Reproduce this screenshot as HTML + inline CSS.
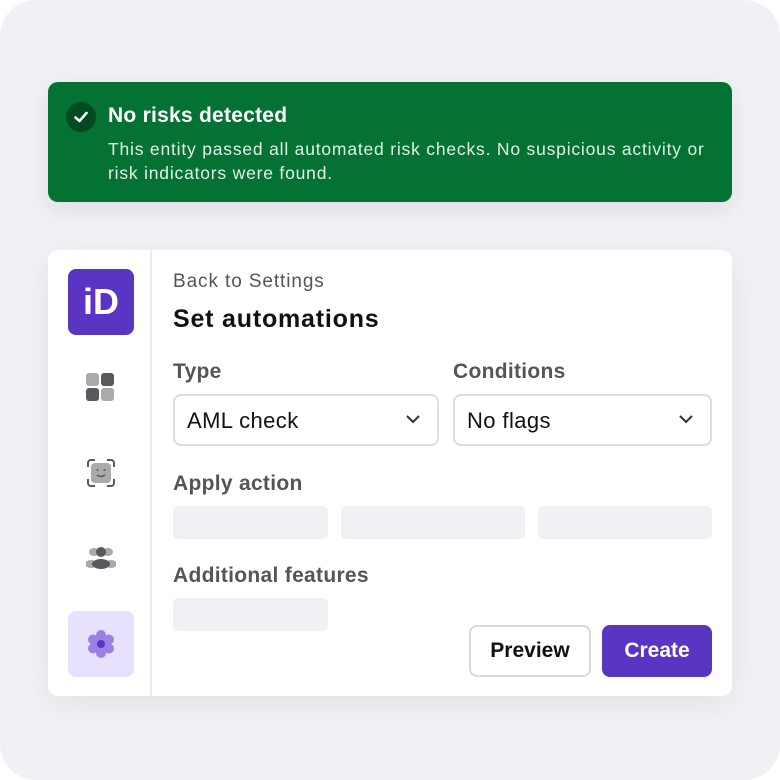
<!DOCTYPE html>
<html><head><style>
*{margin:0;padding:0;box-sizing:border-box}
body{width:780px;height:780px;background:#fff;font-family:"Liberation Sans",sans-serif;position:relative;overflow:hidden}
.bg{position:absolute;left:0;top:0;width:780px;height:780px;background:#f1f1f5;border-radius:36px}
.alert{position:absolute;left:48px;top:82px;width:684px;height:120px;background:#037232;border-radius:10px;color:#fff;box-shadow:0 8px 24px rgba(0,0,0,.08)}
.alert .ic{position:absolute;left:18px;top:20px;width:30px;height:30px;border-radius:50%;background:#024a20}
.card{position:absolute;left:48px;top:250px;width:684px;height:446px;background:#fff;border-radius:10px;box-shadow:0 8px 30px rgba(0,0,0,.06)}
.side{position:absolute;left:0;top:0;width:104px;height:446px;border-right:2px solid #ececf0}
.t{position:absolute;white-space:nowrap}
.sel{position:absolute;height:52px;border:2px solid #dcdce2;border-radius:8px;font-size:22px;color:#111;padding:12px 12px;letter-spacing:0.4px}
.ph{position:absolute;height:33px;background:#f1f1f5;border-radius:5px}
.lb{font-size:21px;font-weight:bold;color:#555;letter-spacing:0.3px}
</style></head><body>
<div class="bg"></div>
<div class="alert">
 <div class="ic"><svg width="30" height="30" viewBox="0 0 30 30"><path d="M9.5 15.5l4 3.5 7-8" stroke="#fff" stroke-width="2.6" fill="none" stroke-linecap="round" stroke-linejoin="round"/></svg></div>
 <div class="t" style="left:60px;top:22px;font-size:21px;font-weight:bold;letter-spacing:0.25px">No risks detected</div>
 <div class="t" style="left:60px;top:55px;font-size:17.5px;line-height:24px;color:#e3f1e8;letter-spacing:0.8px">This entity passed all automated risk checks. No suspicious activity or<br>risk indicators were found.</div>
</div>
<div class="card">
 <div class="side">
  <div style="position:absolute;left:20px;top:19px;width:66px;height:66px;background:#5a35c4;border-radius:8px;color:#fff;font-size:36px;font-weight:bold;text-align:center;line-height:66px">iD</div>
  <svg style="position:absolute;left:38px;top:123px" width="30" height="30"><rect x="0" y="0" width="13" height="13" rx="3" fill="#aaa"/><rect x="15" y="0" width="13" height="13" rx="3" fill="#58585e"/><rect x="0" y="15" width="13" height="13" rx="3" fill="#58585e"/><rect x="15" y="15" width="13" height="13" rx="3" fill="#aaa"/></svg>
  <svg style="position:absolute;left:38px;top:208px" width="30" height="30"><rect x="5" y="5" width="20" height="20" rx="4" fill="#aaa"/><path d="M2 9V5a3 3 0 0 1 3-3h4M21 2h4a3 3 0 0 1 3 3v4M28 21v4a3 3 0 0 1-3 3h-4M9 28H5a3 3 0 0 1-3-3v-4" stroke="#58585e" stroke-width="2" fill="none"/><circle cx="11.5" cy="12" r="1" fill="#58585e"/><circle cx="18.5" cy="12" r="1" fill="#58585e"/><path d="M11 17q4 3 8 0" stroke="#58585e" stroke-width="1.5" fill="none"/></svg>
  <svg style="position:absolute;left:38px;top:296px" width="30" height="24"><ellipse cx="8" cy="6" rx="5" ry="4" fill="#aaa"/><ellipse cx="22" cy="6" rx="5" ry="4" fill="#aaa"/><ellipse cx="5" cy="18" rx="6" ry="4" fill="#aaa"/><ellipse cx="25" cy="18" rx="6" ry="4" fill="#aaa"/><circle cx="15" cy="6" r="5" fill="#58585e"/><ellipse cx="15" cy="18" rx="9" ry="5" fill="#58585e"/></svg>
  <div style="position:absolute;left:20px;top:361px;width:66px;height:66px;background:#e7e1fd;border-radius:8px"></div>
  <svg style="position:absolute;left:39px;top:380px" width="28" height="28" viewBox="0 0 28 28"><g fill="#9b80e6"><circle cx="14" cy="5" r="5"/><circle cx="14" cy="23" r="5"/><circle cx="6" cy="9.5" r="5"/><circle cx="22" cy="9.5" r="5"/><circle cx="6" cy="18.5" r="5"/><circle cx="22" cy="18.5" r="5"/><circle cx="14" cy="14" r="8"/></g><circle cx="14" cy="14" r="4" fill="#5a35c4"/></svg>
 </div>
 <div class="t" style="left:125px;top:21px;font-size:19px;color:#555;letter-spacing:0.9px">Back to Settings</div>
 <div class="t" style="left:125px;top:55px;font-size:25px;font-weight:bold;color:#111;letter-spacing:0.8px">Set automations</div>
 <div class="t lb" style="left:125px;top:110px">Type</div>
 <div class="t lb" style="left:405px;top:110px">Conditions</div>
 <div class="sel" style="left:125px;top:144px;width:266px">AML check<svg style="position:absolute;right:16px;top:18px" width="16" height="10"><path d="M2 2l6 6 6-6" stroke="#333" stroke-width="2" fill="none"/></svg></div>
 <div class="sel" style="left:405px;top:144px;width:259px">No flags<svg style="position:absolute;right:16px;top:18px" width="16" height="10"><path d="M2 2l6 6 6-6" stroke="#333" stroke-width="2" fill="none"/></svg></div>
 <div class="t lb" style="left:125px;top:222px">Apply action</div>
 <div class="ph" style="left:125px;top:256px;width:155px"></div>
 <div class="ph" style="left:293px;top:256px;width:184px"></div>
 <div class="ph" style="left:490px;top:256px;width:174px"></div>
 <div class="t lb" style="left:125px;top:314px">Additional features</div>
 <div class="ph" style="left:125px;top:348px;width:155px"></div>
 <div style="position:absolute;left:421px;top:375px;width:122px;height:52px;border:2px solid #d8d8de;border-radius:8px;text-align:center;line-height:48px;font-size:21px;font-weight:bold;color:#111">Preview</div>
 <div style="position:absolute;left:554px;top:375px;width:110px;height:52px;background:#5a35c4;border-radius:8px;text-align:center;line-height:52px;font-size:21px;font-weight:bold;color:#fff">Create</div>
</div>
</body></html>
